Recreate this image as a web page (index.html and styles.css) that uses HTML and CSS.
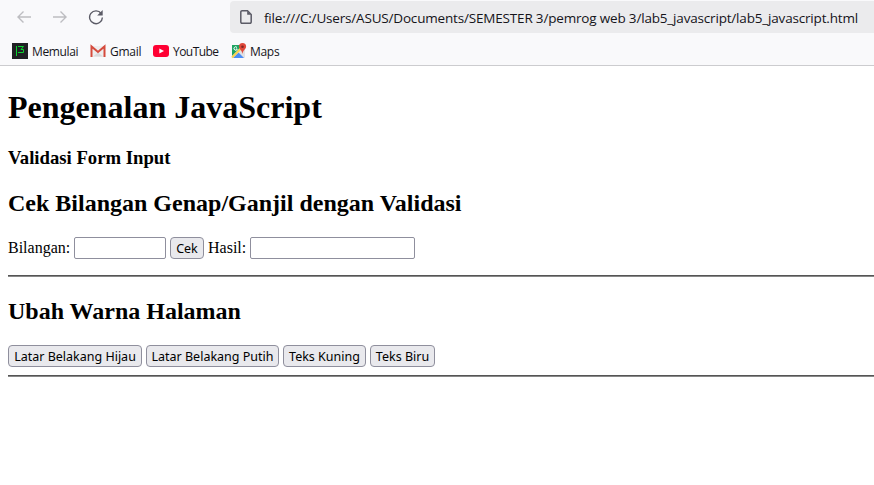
FILE: index.html
```html
<!DOCTYPE html>
<html lang="id">
<head>
<meta charset="utf-8">
<title>Pengenalan JavaScript</title>
<link rel="stylesheet" href="styles.css">
</head>
<body>
<header class="chrome">
  <div class="toolbar">
    <svg class="nav-icon disabled" viewBox="0 0 16 16"><path d="M15 8H1.5M7.500 2.500 2 8l5.500 5.500"/></svg>
    <svg class="nav-icon disabled" viewBox="0 0 16 16"><path d="M1 8h13.500M8.500 2.500 14 8l-5.500 5.500"/></svg>
    <svg class="nav-icon" viewBox="0 0 16 16"><path d="M13.200 4.500A6.400 6.400 0 1 0 14.400 8.500"/><path class="solid" d="M14.700 1v5.500H9.200z"/></svg>
    <div class="urlbar">
      <svg class="page-icon" viewBox="0 0 12 14"><path d="M2 .8h5.500l3.700 3.700V12a1.200 1.200 0 0 1-1.200 1.200H2A1.200 1.200 0 0 1 .8 12V2A1.200 1.200 0 0 1 2 .8z"/><path class="solid" d="M7.200 1v3.800h3.800z"/></svg>
      <span class="url">file:///C:/Users/ASUS/Documents/SEMESTER 3/pemrog web 3/lab5_javascript/lab5_javascript.html</span>
    </div>
  </div>
  <nav class="bookmarks">
    <a class="bookmark memulai"><svg viewBox="0 0 16 16"><path fill="#202024" d="M0 0h16v16H0z"/><path fill="none" stroke="#0bd32f" d="M4.500 3v10M6 3.500h5.500L9 6.500h2.500v3H6"/></svg><span>Memulai</span></a>
    <a class="bookmark gmail"><svg viewBox="0 0 16 16"><path fill="#eeeeef" d="M1 3h14v11H1z"/><path fill="#d9d9dc" d="m3 13.500 5-4 5 4z"/><path fill="none" stroke="#d54b3d" stroke-width="2" d="M1.500 14V3.500L8 9l6.500-5.500V14"/></svg><span>Gmail</span></a>
    <a class="bookmark youtube"><svg viewBox="0 0 16 16"><rect y="2" width="16" height="12" rx="3" fill="#ff0033"/><path fill="#fff" d="m6.300 5.500 4.700 2.500-4.700 2.500z"/></svg><span>YouTube</span></a>
    <a class="bookmark maps"><svg viewBox="0 0 16 16"><rect x="1" y="2" width="13" height="13" rx="1" fill="#dfe1e4"/><path fill="#1fa463" d="M1 2h11L1 13z"/><path fill="#4b8df5" d="m2 15 5.500-5.500L13 15z"/><path stroke="#fbd34c" stroke-width="2" d="m1 14.500 10-10"/><path fill="none" stroke="#fff" d="M6 4.500a1.700 1.700 0 1 0 .3 1.500H5"/><path fill="#df483c" d="M11.500 0A3.600 3.600 0 0 0 8 3.700c0 2.300 3 3.300 3.400 7.300C12 7 15.100 6 15.100 3.700A3.600 3.600 0 0 0 11.500 0z"/><circle cx="11.500" cy="3.700" r="1.300" fill="#7e2822"/></svg><span>Maps</span></a>
  </nav>
</header>
<main>
  <h1><span>Pengenalan JavaScript</span></h1>
  <h3><span>Validasi Form Input</span></h3>
  <h2><span>Cek Bilangan Genap/Ganjil dengan Validasi</span></h2>
  <form class="row">
    <label class="bilangan" for="bilangan">Bilangan:</label>
    <input id="bilangan" class="number" type="text">
    <button class="check" type="button">Cek</button>
    <label class="hasil" for="hasil">Hasil:</label>
    <input id="hasil" class="result" type="text">
  </form>
  <hr>
  <h2 class="color-title"><span>Ubah Warna Halaman</span></h2>
  <div class="row colors">
    <button class="green" type="button">Latar Belakang Hijau</button>
    <button class="white" type="button">Latar Belakang Putih</button>
    <button class="yellow" type="button">Teks Kuning</button>
    <button class="blue" type="button">Teks Biru</button>
  </div>
  <hr class="last">
</main>
</body>
</html>
```
FILE: styles.css
```css
* { box-sizing: border-box; }
body {
  margin: 0;
  overflow: hidden;
  background: #fff;
  color: #000;
  font: 16px "Liberation Serif", serif;
}
.chrome {
  height: 66px;
  background: #f9f9fb;
  border-bottom: 1px solid #cccccf;
  color: #15141a;
  font-family: "Open Sans", sans-serif;
}
.toolbar {
  display: flex;
  align-items: center;
  height: 34px;
  padding-left: 16px;
}
.nav-icon {
  width: 16px;
  height: 16px;
  margin-right: 20px;
  fill: none;
  stroke: #5b5b66;
  stroke-width: 1.4;
}
.nav-icon.disabled { stroke: #bdbdc1; }
.solid { fill: #5b5b66; stroke: none; }
.urlbar {
  display: flex;
  align-items: center;
  flex: 1;
  height: 32px;
  margin: 0 0 0 106px;
  padding-left: 10px;
  background: #ebebed;
  border-radius: 4px 0 0 4px;
}
.page-icon {
  width: 12px;
  height: 14px;
  margin-right: 12px;
  fill: none;
  stroke: #5b5b66;
  stroke-width: 1.5;
}
.url {
  padding-top: 2px;
  font-size: 13.500px;
  letter-spacing: -0.178px;
  white-space: nowrap;
}
.bookmarks {
  display: flex;
  height: 34px;
  padding-left: 12px;
}
.bookmark {
  display: flex;
  align-items: center;
  font-size: 12px;
  letter-spacing: -0.350px;
  white-space: nowrap;
}
.bookmark svg {
  width: 16px;
  height: 16px;
  margin-right: 4px;
}
.memulai { width: 78px; }
.gmail { width: 63px; letter-spacing: -0.250px; }
.youtube { width: 78px; letter-spacing: -0.550px; }
.maps { letter-spacing: -0.300px; }
.maps svg { margin-right: 3px; }
main { padding-left: 8px; }
h1, h2, h3 { margin: 0; white-space: nowrap; }
h1 { height: 37px; margin-top: 22px; font-size: 32px; line-height: 38px; }
h3 { height: 22px; margin-top: 22px; font-size: 18.720px; line-height: 22px; }
h2 { height: 28px; margin-top: 20px; font-size: 24px; line-height: 28px; }
.row {
  display: flex;
  gap: 4px;
  height: 22px;
  margin-top: 20px;
}
label { line-height: 22px; white-space: nowrap; }
.bilangan { width: 62px; }
.hasil { width: 38px; }
input {
  margin: 0;
  height: 22px;
  border: 1px solid #8f8f9d;
  border-radius: 2px;
  background: #fff;
}
.number { width: 92px; }
.result { width: 165px; }
button {
  margin: 0;
  padding: 2px 0 0;
  height: 22px;
  border: 1px solid #8f8f9d;
  border-radius: 4px;
  background: #e9e9ed;
  color: #000;
  font: 12.500px/18px "Noto Sans", sans-serif;
  white-space: nowrap;
}
.check { width: 34px; }
.green { width: 134px; }
.white { width: 133px; }
.yellow { width: 83px; }
.blue { width: 65px; }
hr {
  height: 2px;
  margin: 16px 0 0;
  border: 0;
  border-top: 1px solid #555;
  background: #888;
}
.color-title { margin-top: 20px; }
.last { margin-top: 8px; }
```
